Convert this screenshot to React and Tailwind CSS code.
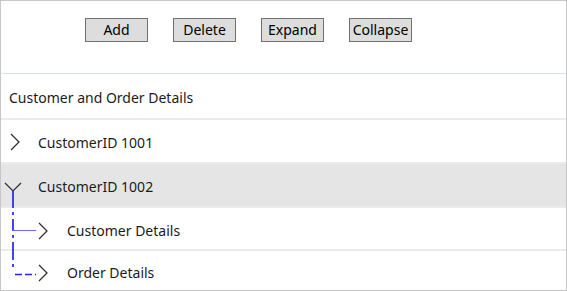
import React from "react";

const buttons = ["Add", "Delete", "Expand", "Collapse"];

const Chevron = () => (
  <svg width="10" height="18" viewBox="0 0 10 18" className="shrink-0">
    <path d="M1 1 L9 9 L1 17" fill="none" stroke="#2b2b2b" strokeWidth="1.2" />
  </svg>
);

const Open = () => (
  <svg width="18" height="10" viewBox="0 0 18 10" className="shrink-0">
    <path d="M1 1 L9 9 L17 1" fill="none" stroke="#2b2b2b" strokeWidth="1.2" />
  </svg>
);

const App = () => {
  return (
    <div
      className="relative w-[567px] h-[291px] border border-[#c6c6c6] bg-white overflow-hidden text-[#1b1b1b]"
      style={{ fontFamily: '"Segoe UI", "Noto Sans", "Open Sans", sans-serif' }}
    >
      {/* toolbar */}
      <div className="h-[73px] border-b border-[#d6e0ea] rounded-bl-[3px] flex items-start pt-[17px] pl-[84px] gap-[25px]">
        {buttons.map((b) => (
          <button
            key={b}
            className="w-[63px] h-[24px] bg-[#dddddd] border border-[#707070] text-[14px] leading-none flex items-center justify-center text-black"
          >
            {b}
          </button>
        ))}
      </div>

      {/* tree */}
      <div className="h-[46px] flex items-center pl-[8px] pt-[3px] text-[14px] border-b-2 border-[#ebebeb]">
        Customer and Order Details
      </div>
      <div className="h-[44px] flex items-center pt-[2px] border-b-2 border-[#ebebeb] text-[14px]">
        <div className="w-[37px] pl-[9px] flex items-center">
          <Chevron />
        </div>
        <span>CustomerID 1001</span>
      </div>
      <div className="h-[44px] flex items-center pt-[2px] bg-[#e5e5e5] border-b-2 border-[#ebebeb] text-[14px]">
        <div className="w-[37px] pl-[3px] flex items-center pt-[2px]">
          <Open />
        </div>
        <span>CustomerID 1002</span>
      </div>
      <div className="h-[43px] flex items-center pt-[4px] border-b-2 border-[#ebebeb] text-[14px]">
        <div className="w-[66px] pl-[37px] flex items-center">
          <Chevron />
        </div>
        <span>Customer Details</span>
      </div>
      <div className="h-[39px] flex items-center pt-[4px] text-[14px]">
        <div className="w-[66px] pl-[37px] flex items-center">
          <Chevron />
        </div>
        <span>Order Details</span>
      </div>

      {/* connector lines */}
      <svg
        className="absolute left-0 top-0 pointer-events-none"
        width="567"
        height="291"
        viewBox="1 1 567 291"
      >
        <path
          d="M13 190 V270"
          fill="none"
          stroke="#2323ff"
          strokeWidth="1.7"
          strokeDasharray="18 4 3 4 12 4 3 4"
        />
        <path d="M13 230.5 H36" fill="none" stroke="#6b6bff" strokeWidth="1" />
        <path
          d="M15 274.5 H36"
          fill="none"
          stroke="#2323ff"
          strokeWidth="1.7"
          strokeDasharray="7 3"
        />
      </svg>
    </div>
  );
};

export default App;
